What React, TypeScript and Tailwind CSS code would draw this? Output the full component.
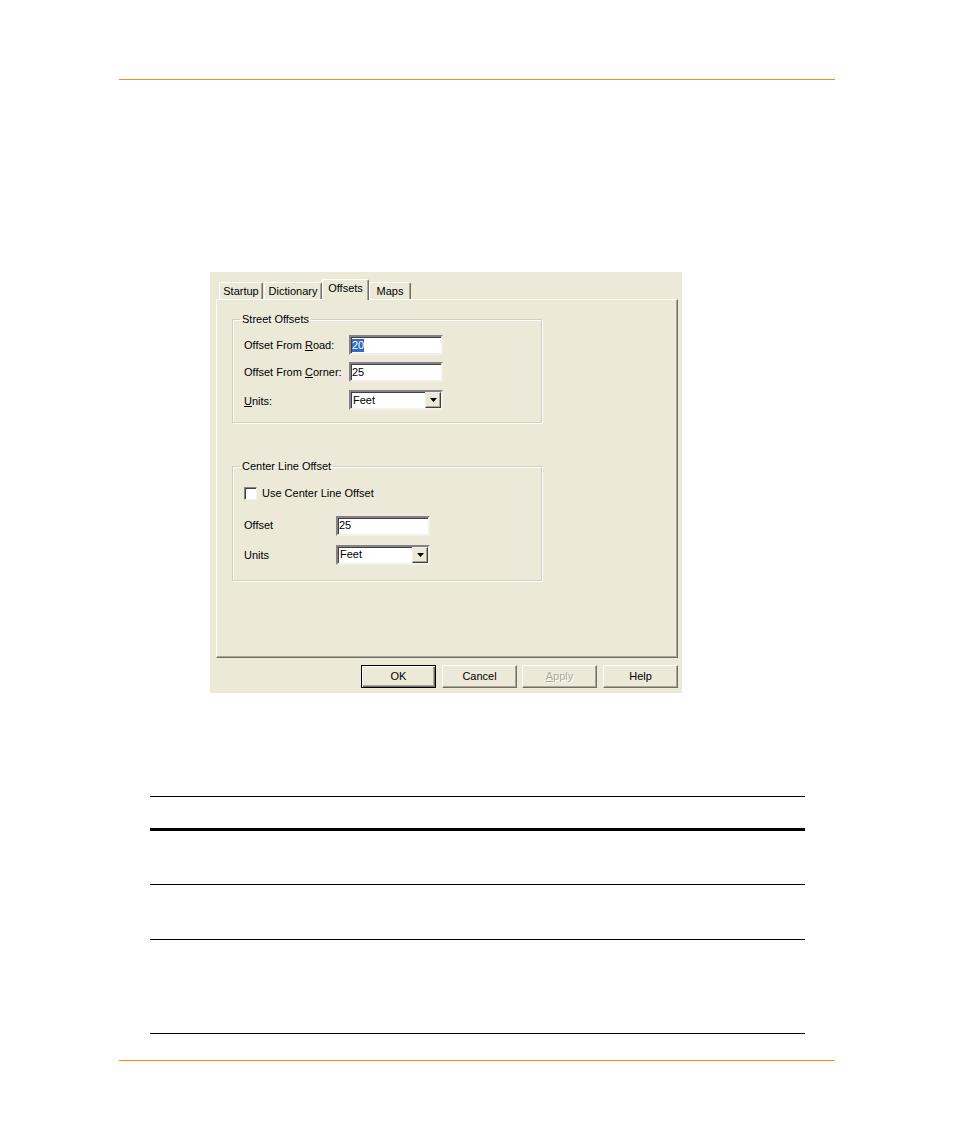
import React from "react";

const sunken =
  "border-2 border-t-[#848284] border-l-[#848284] border-b-[#f4f2e8] border-r-[#f4f2e8] bg-white shadow-[inset_1px_1px_0_#404040]";

function TextBox({ value, selected, width }: { value: string; selected?: boolean; width: string }) {
  return (
    <div className={`${sunken} ${width} h-[20px] flex items-center pl-[1px]`}>
      {selected ? (
        <span className="bg-[#316ac5] text-white leading-[13px] px-0">{value}</span>
      ) : (
        <span className="leading-[13px]">{value}</span>
      )}
    </div>
  );
}

function Combo({ value, width }: { value: string; width: string }) {
  return (
    <div className={`${sunken} ${width} h-[20px] flex items-center justify-between`}>
      <span className="pl-[2px] leading-[13px]">{value}</span>
      <div className="w-[16px] h-[16px] bg-[#ece9d8] border border-t-[#f1efe2] border-l-[#f1efe2] border-b-[#404040] border-r-[#404040] shadow-[inset_-1px_-1px_0_#aca899] flex items-center justify-center">
        <svg width="7" height="4" viewBox="0 0 7 4">
          <path d="M0 0h7L3.5 4z" fill="#000" />
        </svg>
      </div>
    </div>
  );
}

function Tab({ label, width, active, className = "" }: { label: string; width: string; active?: boolean; className?: string }) {
  return (
    <div
      className={`${width} ${className} flex justify-center items-start bg-[#ece9d8] border-l border-t border-r border-l-white border-t-white border-r-[#716f64] rounded-t-[2px] shadow-[inset_-1px_0_0_#aca899] ${
        active ? "h-[21px] -mb-px relative z-10 pt-[2px]" : "h-[17px] pt-[2px]"
      }`}
    >
      <span className="leading-[13px]">{label}</span>
    </div>
  );
}

function Button({ children, primary, disabled, className = "" }: { children: React.ReactNode; primary?: boolean; disabled?: boolean; className?: string }) {
  return (
    <div
      className={`w-[75px] h-[23px] bg-[#ece9d8] flex items-center justify-center ${className} ${
        primary
          ? "border border-black shadow-[inset_1px_1px_0_#fff,inset_-1px_-1px_0_#716f64,inset_-2px_-2px_0_#aca899]"
          : "border border-t-white border-l-white border-b-[#716f64] border-r-[#716f64] shadow-[inset_-1px_-1px_0_#aca899]"
      }`}
    >
      <span className={disabled ? "text-[#aca899] [text-shadow:1px_1px_0_#fff]" : ""}>{children}</span>
    </div>
  );
}

function Group({ title, className, children }: { title: string; className: string; children: React.ReactNode }) {
  return (
    <fieldset className={`border border-[#d0d0bf] shadow-[inset_1px_1px_0_#fff,1px_1px_0_#fff] w-[310px] ml-[15px] ${className}`}>
      <legend className="ml-[7px] px-[2px] leading-[13px]">{title}</legend>
      {children}
    </fieldset>
  );
}

export default function App() {
  return (
    <div className="w-[954px] h-[1133px] bg-white flex flex-col text-[11px] text-black font-['Liberation_Sans',Arial,sans-serif]">
      <div className="mt-[79px] ml-[119px] w-[716px] h-px bg-[#ee8a2a]" />

      <div className="mt-[192px] ml-[210px] w-[472px] h-[421px] bg-[#ece9d8] flex flex-col pl-[6px] pt-[7px]">
        <div className="h-[20px] flex items-end">
          <Tab label="Startup" width="w-[44px]" className="ml-[3px]" />
          <Tab label="Dictionary" width="w-[58px]" className="ml-[1px]" />
          <Tab label="Offsets" width="w-[47px]" active />
          <Tab label="Maps" width="w-[42px]" />
        </div>

        <div className="w-[462px] h-[359px] border border-t-white border-l-white border-b-[#716f64] border-r-[#716f64] shadow-[inset_-1px_-1px_0_#aca899] flex flex-col">
          <Group title="Street Offsets" className="mt-[13px] h-[110px]">
            <div className="pl-[11px] pt-[9px] grid grid-cols-[105px_94px] gap-y-[7px] items-center">
              <span>
                Offset From <u>R</u>oad:
              </span>
              <TextBox value="20" selected width="w-[94px]" />
              <span>
                Offset From <u>C</u>orner:
              </span>
              <TextBox value="25" width="w-[94px]" />
              <span className="self-start pt-[3px] mt-px">
                <u>U</u>nits:
              </span>
              <div className="mt-px">
                <Combo value="Feet" width="w-[94px]" />
              </div>
            </div>
          </Group>

          <Group title="Center Line Offset" className="mt-[37px] h-[121px]">
            <div className="pl-[11px] pt-[12px] flex flex-col">
              <div className="flex items-center gap-[5px]">
                <div className="w-[13px] h-[13px] bg-white border border-t-[#848284] border-l-[#848284] border-b-[#f4f2e8] border-r-[#f4f2e8] shadow-[inset_1px_1px_0_#404040]" />
                <span>Use Center Line Offset</span>
              </div>
              <div className="mt-[14px] grid grid-cols-[92px_94px] gap-y-[9px] items-center">
                <span>Offset</span>
                <TextBox value="25" width="w-[94px]" />
                <span className="self-start pt-[2px]">Units</span>
                <Combo value="Feet" width="w-[94px]" />
              </div>
            </div>
          </Group>
        </div>

        <div className="mt-[7px] ml-[145px] flex">
          <Button primary>OK</Button>
          <Button className="ml-[6px]">Cancel</Button>
          <Button className="ml-[5px]" disabled>
            <u>A</u>pply
          </Button>
          <Button className="ml-[6px]">Help</Button>
        </div>
      </div>

      <div className="mt-[103px] ml-[150px] w-[655px] h-px bg-black" />
      <div className="mt-[31px] ml-[150px] w-[655px] h-[3px] bg-black" />
      <div className="mt-[53px] ml-[150px] w-[655px] h-px bg-black" />
      <div className="mt-[54px] ml-[150px] w-[655px] h-px bg-black" />
      <div className="mt-[93px] ml-[150px] w-[655px] h-px bg-black" />
      <div className="mt-[26px] ml-[119px] w-[716px] h-px bg-[#ff8c00]" />
    </div>
  );
}
